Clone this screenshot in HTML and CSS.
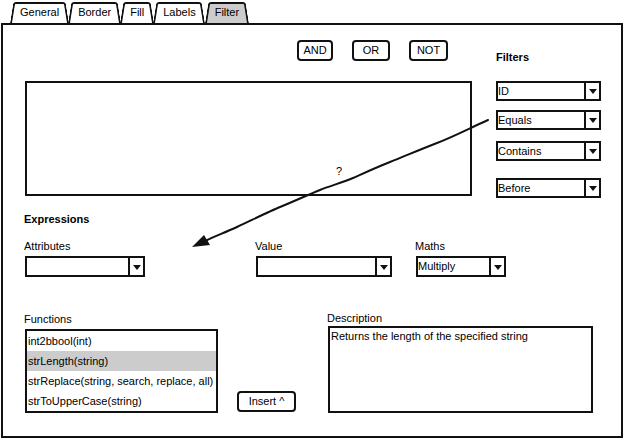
FILE: index.html
```html
<!DOCTYPE html>
<html lang="en">
<head>
  <meta charset="UTF-8">
  <meta name="viewport" content="width=device-width, initial-scale=1.0">
  <title>Filter</title>
  <link rel="stylesheet" href="styles.css">
</head>
<body>
  <div class="tabs">
    <div class="tab">General</div>
    <div class="tab">Border</div>
    <div class="tab">Fill</div>
    <div class="tab">Labels</div>
    <div class="tab active">Filter</div>
  </div>
  <div class="panel">
    <div class="top">
      <div class="query">
        <div class="ops">
          <div class="btn btn_and">AND</div>
          <div class="btn btn_or">OR</div>
          <div class="btn btn_not">NOT</div>
        </div>
        <div class="area"><span class="hint">?</span></div>
      </div>
      <div class="filters">
        <div class="title">Filters</div>
        <div class="select sel_id"><span>ID</span><i></i></div>
        <div class="select sel_eq"><span>Equals</span><i></i></div>
        <div class="select sel_con"><span>Contains</span><i></i></div>
        <div class="select sel_bef"><span>Before</span><i></i></div>
      </div>
    </div>

    <div class="title expr_title">Expressions</div>
    <div class="exprs">
      <div class="field f_attr">
        <div class="label">Attributes</div>
        <div class="select"><span></span><i></i></div>
      </div>
      <div class="field f_value">
        <div class="label">Value</div>
        <div class="select"><span></span><i></i></div>
      </div>
      <div class="field f_maths">
        <div class="label">Maths</div>
        <div class="select"><span>Multiply</span><i></i></div>
      </div>
    </div>

    <div class="bottom">
      <div class="field f_func">
        <div class="label">Functions</div>
        <ul class="list">
          <li>int2bbool(int)</li>
          <li class="sel">strLength(string)</li>
          <li>strReplace(string, search, replace, all)</li>
          <li>strToUpperCase(string)</li>
        </ul>
      </div>
      <div class="btn insert">Insert ^</div>
      <div class="field f_desc">
        <div class="label">Description</div>
        <div class="desc_box">Returns the length of the specified string</div>
      </div>
    </div>

    <!-- connector arrow drawn over the panel -->
    <svg class="arrow" viewBox="3 25 618 411" width="618" height="411">
      <path d="M488 120 C470 128 455 136 437 143 S405 156 390 162 S362 174 353 178 S330 186 320 190 S290 203 280 207 S250 221 237 227 S215 236 205 241" fill="none" stroke="#111" stroke-width="2" stroke-linecap="round"/>
      <polygon points="192,247 204,235 210,245" fill="#111"/>
    </svg>
  </div>
</body>
</html>
```

FILE: styles.css
```css
* {
  margin: 0;
  padding: 0;
  box-sizing: border-box;
}
body {
  font-family: "Liberation Sans", Arial, sans-serif;
  font-size: 11px;
  color: #000;
  background: #fff;
}
/* 标签页 */
.tabs {
  display: flex;
  height: 21px;
  margin: 2px 0 0 10px;
}
.tab {
  position: relative;
  z-index: 0;
  padding: 0 10px;
  line-height: 21px;
  margin-right: -1px;
}
/* 两个斜切的伪元素拼成梯形 */
.tab::before,
.tab::after {
  content: '';
  position: absolute;
  top: 0;
  bottom: 0;
  width: 60%;
  border-top: 2px solid #111;
  background: #fff;
  z-index: -1;
  transform-origin: bottom;
}
.tab::before {
  left: 0;
  border-left: 2px solid #111;
  border-top-left-radius: 3px;
  transform: skewX(-9deg);
}
.tab::after {
  right: 0;
  border-right: 2px solid #111;
  border-top-right-radius: 3px;
  transform: skewX(9deg);
}
.tab.active::before,
.tab.active::after {
  background: #ccc;
}
/* 主面板 */
.panel {
  position: relative;
  width: 622px;
  height: 415px;
  margin-left: 1px;
  border: 2px solid #111;
  padding-left: 22px;
}
.top {
  display: flex;
  align-items: flex-start;
}
.query {
  width: 447px;
}
.ops {
  display: flex;
  gap: 19px;
  margin-top: 15px;
  padding-left: 272px;
}
.btn {
  height: 21px;
  border: 2px solid #111;
  border-radius: 4px;
  text-align: center;
  line-height: 17px;
  background: #fff;
}
.btn_and {
  width: 36px;
}
.btn_or {
  width: 38px;
}
.btn_not {
  width: 39px;
}
.area {
  height: 115px;
  margin-top: 20px;
  border: 2px solid #111;
  padding: 82px 0 0 309px;
  line-height: 13px;
}
.filters {
  width: 105px;
  margin-left: 24px;
}
.title {
  font-weight: bold;
  line-height: 13px;
}
.filters .title {
  margin-top: 26px;
}
/* 下拉框 */
.select {
  display: flex;
  height: 20px;
  border: 2px solid #111;
  background: #fff;
}
.select span {
  flex: 1;
  line-height: 16px;
  white-space: nowrap;
  overflow: hidden;
}
.select i {
  position: relative;
  width: 15px;
  border-left: 2px solid #111;
}
.select i::after {
  content: '';
  position: absolute;
  left: 50%;
  top: 50%;
  margin: -2px 0 0 -4px;
  border-left: 4px solid transparent;
  border-right: 4px solid transparent;
  border-top: 5px solid #111;
}
.sel_id {
  margin-top: 17px;
}
.sel_eq {
  margin-top: 9px;
}
.sel_con {
  margin-top: 11px;
}
.sel_bef {
  margin-top: 17px;
}
/* 表达式区域 */
.expr_title {
  margin: 15px 0 0 -1px;
}
.exprs {
  display: flex;
  margin-top: 14px;
}
.label {
  line-height: 13px;
  margin-left: -1px;
}
.field .select {
  height: 21px;
  margin-top: 3px;
}
.f_attr {
  width: 120px;
}
.f_value {
  width: 136px;
  margin-left: 111px;
}
.f_maths {
  width: 90px;
  margin-left: 24px;
}
/* 函数和描述 */
.bottom {
  display: flex;
  align-items: flex-end;
  margin-top: 35px;
}
.f_func {
  width: 193px;
}
.list {
  list-style: none;
  height: 84px;
  margin-top: 3px;
  border: 2px solid #111;
}
.list li {
  height: 20px;
  line-height: 20px;
  padding-left: 1px;
  white-space: nowrap;
  overflow: hidden;
}
.list li.sel {
  background: #ccc;
}
.insert {
  width: 59px;
  margin: 0 0 1px 19px;
}
.f_desc {
  width: 265px;
  margin-left: 32px;
}
.desc_box {
  height: 87px;
  margin-top: 1px;
  border: 2px solid #111;
  padding: 2px 0 0 1px;
  line-height: 13px;
}
.arrow {
  position: absolute;
  left: 0;
  top: 0;
  pointer-events: none;
}
```
